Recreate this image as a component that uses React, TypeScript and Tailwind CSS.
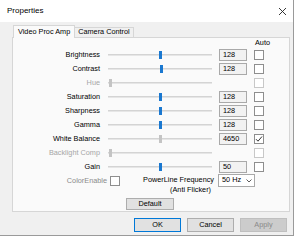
import React from "react";

type Row = {
  label: string;
  pos: number;
  value?: string;
  disabled?: boolean;
  checked?: boolean;
  grayThumb?: boolean;
};

const rows: Row[] = [
  { label: "Brightness", pos: 51, value: "128" },
  { label: "Contrast", pos: 52, value: "128" },
  { label: "Hue", pos: 1, disabled: true },
  { label: "Saturation", pos: 51, value: "128" },
  { label: "Sharpness", pos: 51, value: "128" },
  { label: "Gamma", pos: 51, value: "128" },
  { label: "White Balance", pos: 51, value: "4650", checked: true, grayThumb: true },
  { label: "Backlight Comp", pos: 1, disabled: true },
  { label: "Gain", pos: 51, value: "50" },
];

function Checkbox({ checked, disabled }: { checked?: boolean; disabled?: boolean }) {
  return (
    <div
      className={
        "w-[10px] h-[10px] bg-white border flex items-center justify-center " +
        (disabled ? "border-[#c8c8c8]" : "border-[#8e8e8e]")
      }
    >
      {checked && (
        <svg width="8" height="8" viewBox="0 0 8 8">
          <path d="M1 4.2 L3 6.2 L7 1.5" fill="none" stroke="#333" strokeWidth="1" />
        </svg>
      )}
    </div>
  );
}

function SliderRow({ r }: { r: Row }) {
  const gray = r.disabled || r.grayThumb;
  return (
    <div className="h-[14px] flex items-center">
      <div
        className={
          "w-[87px] text-right leading-none " + (r.disabled ? "text-[#a6a6a6]" : "text-black")
        }
      >
        {r.label}
      </div>
      <div className="ml-[8px] w-[104px] h-[14px] relative flex items-center">
        <div className="w-full h-[2px] bg-[#e6e6e6] border-t border-[#d4d4d4]" />
        <div
          className={
            "absolute top-[3px] w-[3px] h-[8px] " + (gray ? "bg-[#c4c4c4]" : "bg-[#1a78d0]")
          }
          style={{ left: `${r.pos}px` }}
        />
      </div>
      <div className="ml-[7px] w-[28px] h-[12px]">
        {r.value && (
          <div className="w-full h-full bg-[#f2f2f2] border border-[#a9a9a9] pl-[3px] flex items-center leading-none text-black">
            {r.value}
          </div>
        )}
      </div>
      <div className="ml-[7px]">
        <Checkbox checked={r.checked} disabled={r.disabled} />
      </div>
    </div>
  );
}

export default function App() {
  return (
    <div className="w-[300px] h-[240px] bg-white font-['Liberation_Sans',Arial,sans-serif] text-[7.3px]">
      <div className="w-[294px] h-[236px] bg-[#f0f0f0] border-r border-b border-[#9a9a9a] flex flex-col">
        {/* title bar */}
        <div className="h-[22px] bg-white flex items-center justify-between pl-[7px] pr-[7px]">
          <span className="text-[8px] text-black">Properties</span>
          <svg width="7" height="7" viewBox="0 0 7 7">
            <path d="M0 0 L7 7 M7 0 L0 7" stroke="#222" strokeWidth="0.9" />
          </svg>
        </div>
        {/* tabs */}
        <div className="pt-[3px] pl-[13px] flex items-end h-[15px]">
          <div className="h-[13px] px-[4px] bg-[#fafafa] border border-b-0 border-[#d6d6d6] flex items-center text-black relative top-[1px]">
            Video Proc Amp
          </div>
          <div className="h-[10px] px-[3px] bg-[#f0f0f0] border border-l-0 border-b-0 border-[#d6d6d6] flex items-center text-black">
            Camera Control
          </div>
        </div>
        {/* panel */}
        <div className="ml-[12px] w-[278px] h-[175px] bg-[#fafafa] border border-[#d6d6d6] flex flex-col">
          <div className="h-[10px] pl-[242px] flex items-center leading-none text-black">Auto</div>
          {rows.map((r) => (
            <SliderRow key={r.label} r={r} />
          ))}
          <div className="h-[22px] flex items-start">
            <div className="w-[94px] text-right text-[#8a8a8a] leading-none mt-[3px]">ColorEnable</div>
            <div className="ml-[3px] mt-[2px]">
              <Checkbox />
            </div>
            <div className="w-[94px] text-right text-black leading-[10px] mt-[1px]">
              <div>PowerLine Frequency</div>
              <div className="pr-[3px]">(Anti Flicker)</div>
            </div>
            <div className="ml-[4px] w-[37px] h-[13px] bg-white border border-[#a9a9a9] flex items-center justify-between pl-[3px] pr-[2px] text-black">
              <span>50 Hz</span>
              <svg width="6" height="4" viewBox="0 0 6 4">
                <path d="M0.5 0.5 L3 3 L5.5 0.5" fill="none" stroke="#333" strokeWidth="0.8" />
              </svg>
            </div>
          </div>
          <div className="mt-[2px] ml-[113px] w-[48px] h-[12px] bg-[#e1e1e1] border border-[#adadad] flex items-center justify-center text-black">
            Default
          </div>
        </div>
        {/* buttons */}
        <div className="mt-[6px] flex justify-end gap-[6px] pr-[6px]">
          <div className="w-[47px] h-[14px] bg-[#e1e1e1] border border-[#0078d7] flex items-center justify-center text-black">
            OK
          </div>
          <div className="w-[47px] h-[14px] bg-[#e1e1e1] border border-[#adadad] flex items-center justify-center text-black">
            Cancel
          </div>
          <div className="w-[47px] h-[14px] bg-[#cccccc] border border-[#bfbfbf] flex items-center justify-center text-[#8a8a8a]">
            Apply
          </div>
        </div>
      </div>
    </div>
  );
}
